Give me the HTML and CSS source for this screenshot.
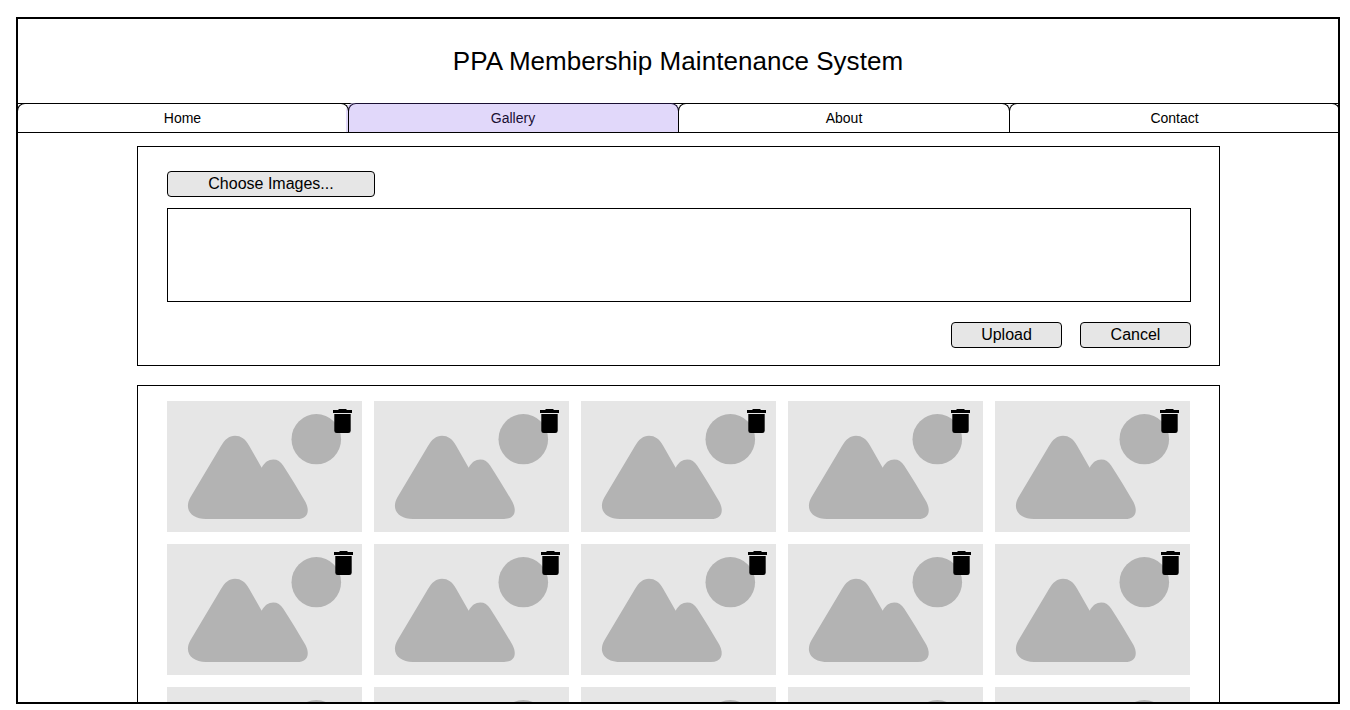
FILE: index.html
```html
<!DOCTYPE html>
<html lang="en">
<head>
<meta charset="utf-8">
<title>PPA Membership Maintenance System</title>
<link rel="stylesheet" href="styles.css">
</head>
<body>
<svg class="defs" width="0" height="0" aria-hidden="true">
  <symbol id="photo" viewBox="0 0 195 131">
    <ellipse cx="149.3" cy="38.2" rx="24.8" ry="25.1"/>
    <path d="M54 45C58 38.300 62 34.700 67.900 34.700C74 34.700 78.500 38 82 44.500L94.700 66.700C97.500 61.500 101.500 58.600 106.300 58.600C110.500 58.600 113.500 60.500 116.300 64.700C124 76.500 131.500 89 138.500 101C143.500 111 140 118 130 118H39C25 118 16.500 109 23.300 96.500Z"/>
  </symbol>
  <symbol id="trash" viewBox="0 0 20 24">
    <path d="M0 1H5L6 0H13L14 1H19V4H0ZM1.300 5H17.700V21.700Q17.700 24 15.300 24H3.700Q1.300 24 1.300 21.700Z"/>
  </symbol>
</svg>
<div class="frame">
  <header class="header"><h1 class="title">PPA Membership Maintenance System</h1></header>
  <nav class="tabs">
    <a class="tab tab-first">Home</a>
    <a class="tab tab-active">Gallery</a>
    <a class="tab">About</a>
    <a class="tab">Contact</a>
  </nav>
  <main class="content">
    <section class="panel upload">
      <button class="btn btn-choose">Choose Images...</button>
      <div class="file-list"></div>
      <div class="actions">
        <button class="btn">Upload</button>
        <button class="btn">Cancel</button>
      </div>
    </section>
    <section class="panel gallery">
      <div class="tile"><svg class="photo"><use href="#photo"/></svg><svg class="trash"><use href="#trash"/></svg></div>
      <div class="tile"><svg class="photo"><use href="#photo"/></svg><svg class="trash"><use href="#trash"/></svg></div>
      <div class="tile"><svg class="photo"><use href="#photo"/></svg><svg class="trash"><use href="#trash"/></svg></div>
      <div class="tile"><svg class="photo"><use href="#photo"/></svg><svg class="trash trash-inset"><use href="#trash"/></svg></div>
      <div class="tile"><svg class="photo"><use href="#photo"/></svg><svg class="trash trash-last"><use href="#trash"/></svg></div>
      <div class="tile lower"><svg class="photo"><use href="#photo"/></svg><svg class="trash"><use href="#trash"/></svg></div>
      <div class="tile lower"><svg class="photo"><use href="#photo"/></svg><svg class="trash"><use href="#trash"/></svg></div>
      <div class="tile lower"><svg class="photo"><use href="#photo"/></svg><svg class="trash"><use href="#trash"/></svg></div>
      <div class="tile lower"><svg class="photo"><use href="#photo"/></svg><svg class="trash trash-inset"><use href="#trash"/></svg></div>
      <div class="tile lower"><svg class="photo"><use href="#photo"/></svg><svg class="trash trash-last"><use href="#trash"/></svg></div>
      <div class="tile"><svg class="photo"><use href="#photo"/></svg></div>
      <div class="tile"><svg class="photo"><use href="#photo"/></svg></div>
      <div class="tile"><svg class="photo"><use href="#photo"/></svg></div>
      <div class="tile"><svg class="photo"><use href="#photo"/></svg></div>
      <div class="tile"><svg class="photo"><use href="#photo"/></svg></div>
    </section>
  </main>
</div>
</body>
</html>
```
FILE: styles.css
```css
* { box-sizing: border-box; }
body {
  margin: 0;
  height: 710px;
  padding: 17px 10px 6px 16px;
  overflow: hidden;
  background: #fff;
  color: #000;
  font-family: "Liberation Sans", Arial, sans-serif;
}
.defs { display: block; }
.frame {
  width: 1324px;
  height: 687px;
  border: 2px solid #000;
  overflow: hidden;
}
.header {
  height: 84px;
  display: flex;
  align-items: center;
  justify-content: center;
}
.title { margin: 0; font-size: 26px; font-weight: 400; letter-spacing: 0.04px; }
.tabs {
  display: grid;
  grid-template-columns: 331px 330px 331px 331px;
  width: 1323px;
  height: 30px;
  margin-left: -1px;
  border-top: 1px solid #000;
  border-bottom: 1px solid #000;
}
.tab {
  margin-top: -1px;
  margin-right: -1px;
  border: 1px solid #000;
  border-bottom: 0;
  border-radius: 8px 8px 0 0;
  display: flex;
  align-items: center;
  justify-content: center;
  font-size: 14px;
}
.tab:last-child { margin-right: 0; }
.tab-first { z-index: 1; padding-right: 1px; }
.tab-active { background: #e1d8fa; color: #190f32; border-color: #190f32; box-shadow: -2px 0 0 0 #e1d8fa; padding-right: 1px; }
.content { width: 1083px; margin: 13px 0 0 119px; }
.panel { border: 1px solid #000; }
.upload { height: 220px; padding: 24px 28px 0 29px; }
.btn {
  display: block;
  width: 111px;
  height: 26px;
  padding: 0;
  border: 1px solid #000;
  border-radius: 4px;
  background: #e6e6e6;
  color: #000;
  font: 16px "Liberation Sans", Arial, sans-serif;
}
.btn-choose { width: 208px; }
.file-list { height: 94px; margin-top: 11px; border: 1px solid #000; }
.actions { display: flex; justify-content: flex-end; gap: 18px; margin-top: 20px; }
.gallery {
  margin-top: 19px;
  padding: 15px 0 15px 29px;
  display: grid;
  grid-template-columns: repeat(5, 195px);
  grid-auto-rows: 131px;
  gap: 12px;
}
.tile { position: relative; background: #e6e6e6; }
.photo { display: block; width: 195px; height: 131px; fill: #b3b3b3; }
.trash { position: absolute; top: 8px; right: 9px; width: 20px; height: 24px; }
.trash-inset { right: 12px; }
.trash-last { right: 10px; }
.lower .trash { top: 7px; right: 8px; }
.lower .trash-inset { right: 11px; }
.lower .trash-last { right: 9px; }
```
